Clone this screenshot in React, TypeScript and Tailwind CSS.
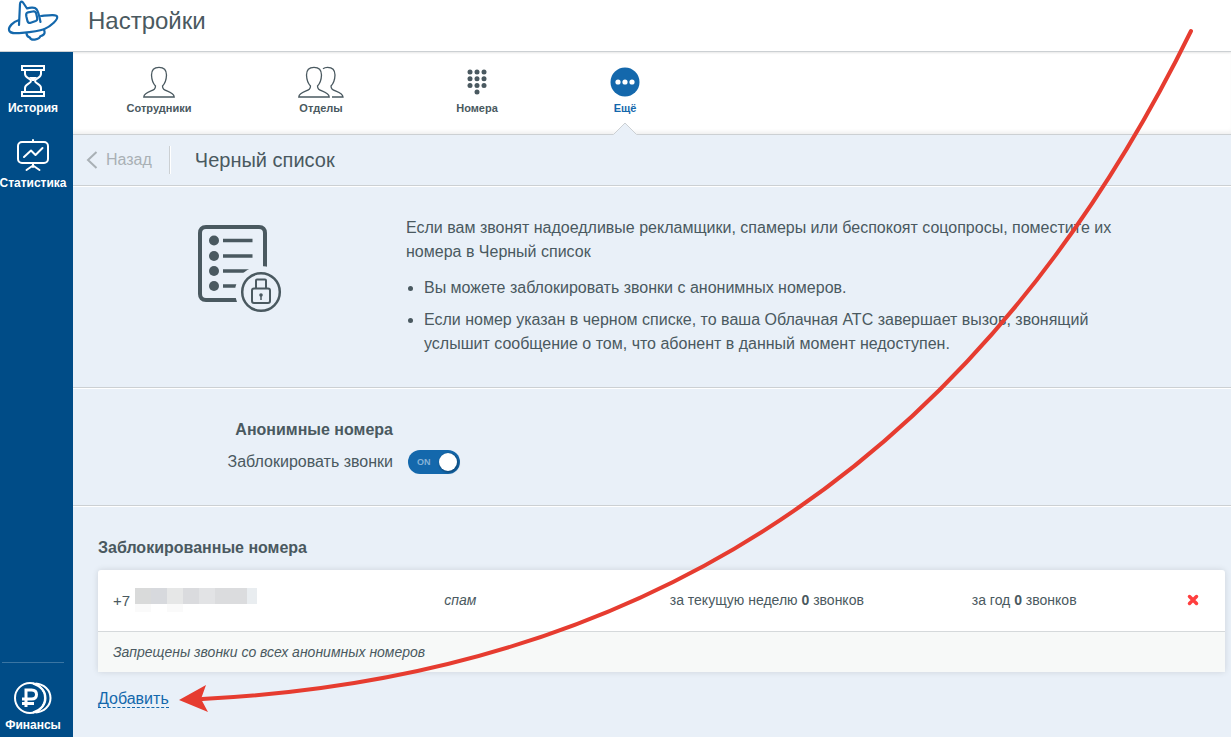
import { useState } from 'react'
import type { ReactNode } from 'react'
import { clsx } from 'clsx'

const hiddenDigits = [
  { top: 'bg-[#d9dada]', bottom: 'bg-[#fafafa]' },
  { top: 'bg-[#d7d9dd]', bottom: 'bg-white' },
  { top: 'bg-[#e6e7e7]', bottom: 'bg-[#fafafa]' },
  { top: 'bg-[#dadbde]', bottom: 'bg-white' },
  { top: 'bg-[#e2e3e5]', bottom: 'bg-white' },
  { top: 'bg-[#dbdcde]', bottom: 'bg-white' },
  { top: 'bg-[#dbdcde]', bottom: 'bg-white' }
]

function LogoIcon(): React.JSX.Element {
  return (
    <svg width="60" height="42" viewBox="0 0 60 42" fill="none" stroke="#1468ac" strokeWidth="2.200" strokeLinecap="round" strokeLinejoin="round">
      <path d="M19 25 20 4c.1-2.500 1.500-3 3-1.500L27 8.500c3.500-1.300 8-1.200 9.500.7 1.500 2 2.500 5 4 12.800" />
      <path d="M19 20C12.500 22 8.500 27 9 30c.5 3.500 8 3.500 13 2.800 10-.8 16-1.300 22-3.600 8-3.200 13.500-9.700 13.200-12.200-.4-3-10-1.500-16.200-1" />
      <path d="M26.500 33.500c.3 2.500 1.300 3.500 3.300 3.800.7 2.200 2 2.700 5 2.300 3.200-.5 5.200-1.400 5.500-3.400 2.700-.7 4.500-2 4.300-4.200l-.6-2.500" />
      <path d="m28 12.300 4.800-.8c2-.3 3 .3 3.400 2l1 4.500c.3 1.700-.2 2.500-1.500 3l-5 1.700c-1.700.6-2.700.1-3.200-1.500l-1.200-5c-.4-2 .1-3.500 1.700-3.900Z" />
    </svg>
  )
}

function HourglassIcon(): React.JSX.Element {
  return (
    <svg width="26" height="32" viewBox="0 0 26 32" fill="none" stroke="#fff" strokeWidth="2">
      <path d="M2 1h22v4H2zM2 27h22v4H2zM5 5v4c0 4 6 4.500 6 7s-6 3-6 7v4M21 5v4c0 4-6 4.500-6 7s6 3 6 7v4" />
      <path fill="#fff" stroke="none" d="M9 12h8l-3 4h-2z" />
    </svg>
  )
}

function ChartIcon(): React.JSX.Element {
  return (
    <svg width="34" height="33" viewBox="0 0 34 33" fill="none" stroke="#fff" strokeWidth="2" strokeLinecap="round" strokeLinejoin="round">
      <rect x="2" y="3" width="30" height="21" rx="4" />
      <path d="M17 1v2M17 24v4M10.500 31l6.500-4.500 6.500 4.500M8 18l7-6.500 4.500 4.500 7-7" />
    </svg>
  )
}

function RoubleIcon(): React.JSX.Element {
  return (
    <svg width="38" height="32" viewBox="0 0 38 32" fill="none" stroke="#fff" strokeWidth="2">
      <circle cx="16" cy="16" r="15" />
      <path d="M21.500 1.500c8.500.5 15 6.500 15 14.500s-6.500 14-15 14.500M19 1.500c7 2.500 12.500 7 12.500 14.500S26 28 19 30.500" />
      <path strokeWidth="3" d="M12 25V8h5.500c3 0 5 1.500 5 4.500s-2 4.500-5 4.500H8M8 21.500h12" />
    </svg>
  )
}

function PersonIcon(): React.JSX.Element {
  return (
    <svg width="32" height="32" viewBox="0 0 32 32" fill="none" stroke="#4a5960" strokeWidth="1.300">
      <path d="M12.500 20C9.500 17 8.700 14 8.500 9c0-5 2.500-7.700 7.500-7.700s7.500 2.700 7.500 7.700c-.2 5-1 8-4 11 0 3 1.500 3.800 5 5.200C29 27 31 28.200 31.200 31H.8c.2-2.800 2.200-4 6.700-5.800 3.500-1.400 5-2.200 5-5.200Z" />
    </svg>
  )
}

function PeopleIcon(): React.JSX.Element {
  return (
    <svg width="46" height="32" viewBox="0 0 46 32" fill="none" stroke="#4a5960" strokeWidth="1.300">
      <path d="M12.500 20C9.500 17 8.700 14 8.500 9c0-5 2.500-7.700 7.500-7.700s7.500 2.700 7.500 7.700c-.2 5-1 8-4 11 0 3 1.500 3.800 5 5.200C29 27 31 28.200 31.200 31H.8c.2-2.800 2.200-4 6.700-5.800 3.500-1.400 5-2.200 5-5.200Z" />
      <path d="M25 2.800c1.200-1 2.700-1.500 4.500-1.500 5 0 7.500 2.700 7.500 7.700-.2 5-1 8-4 11 0 3 1.500 3.800 5 5.200 4.500 1.800 6.800 3 7 5.800H34" />
    </svg>
  )
}

function DialpadIcon(): React.JSX.Element {
  return (
    <svg width="20" height="26" viewBox="0 0 20 26" fill="#4a5960">
      {[3, 10, 17].map((x) => [3, 9.7, 16.4].map((y) => <circle key={`${x}-${y}`} cx={x} cy={y} r="2.500" />))}
      <circle cx="10" cy="23" r="2.500" />
    </svg>
  )
}

function MoreIcon(): React.JSX.Element {
  return (
    <svg width="30" height="30" viewBox="0 0 30 30">
      <circle cx="15" cy="15" r="14.500" fill="#1468ac" />
      <g fill="#fff">
        <circle cx="8" cy="15" r="2.600" />
        <circle cx="15" cy="15" r="2.600" />
        <circle cx="22" cy="15" r="2.600" />
      </g>
    </svg>
  )
}

function BlacklistIcon(): React.JSX.Element {
  return (
    <svg className="shrink-0" width="84" height="88" viewBox="0 0 84 88" fill="none" stroke="#4a5960">
      <path strokeWidth="4" d="M67 50V8c0-3.500-2-6-6-6H8C4 2 2 4.500 2 8v61c0 3.500 2 6 6 6h40" />
      <path strokeWidth="3.500" d="M25 15.500h29.500M25 31h29.500M25 46h29.500M25 61h20" />
      <g fill="#4a5960" stroke="none">
        <circle cx="16" cy="15.500" r="5" />
        <circle cx="16" cy="31" r="5" />
        <circle cx="16" cy="46" r="5" />
        <circle cx="16" cy="61" r="5" />
      </g>
      <circle cx="63" cy="67" r="26" fill="#e9f0f8" stroke="none" />
      <circle cx="63" cy="67" r="18.800" strokeWidth="2.500" />
      <rect x="54" y="63.500" width="18" height="14.500" rx="2" strokeWidth="2" />
      <path strokeWidth="2" d="M58 63.500V55.500c0-.8.500-1 1-1h8c.5 0 1 .2 1 1v8" />
      <circle cx="63" cy="70" r="1.800" fill="#4a5960" stroke="none" />
      <path strokeWidth="1.500" d="M63 70v5" />
    </svg>
  )
}

function SideItem({ icon, label }: { icon: ReactNode; label: string }): React.JSX.Element {
  return (
    <a href="#" className="flex w-[66px] flex-col items-center gap-[3px] text-xs leading-4 font-bold text-white">
      {icon}
      <span>{label}</span>
    </a>
  )
}

function Tab({
  icon,
  label,
  active,
  className
}: {
  icon: ReactNode
  label: string
  active?: boolean
  className: string
}): React.JSX.Element {
  return (
    <a
      href="#"
      className={clsx(
        'relative flex flex-col items-center pt-3.5 text-[11px] leading-4 font-bold',
        active ? 'text-[#1468ac]' : 'text-[#4a5960]',
        className
      )}
    >
      <span className="flex h-8 items-center">{icon}</span>
      <span className="mt-0.5">{label}</span>
      {active && (
        <svg className="absolute -bottom-px" width="24" height="13" viewBox="0 0 24 13" fill="#e9f0f8" stroke="#ccd0d3">
          <path stroke="none" d="M0 13 12 1l12 12z" />
          <path d="M.5 12.500 12 1l11.500 11.500" />
        </svg>
      )}
    </a>
  )
}

// Curved pointer that leads to the "Добавить" link.
function Pointer(): React.JSX.Element {
  return (
    <svg className="pointer-events-none absolute top-0 left-0 z-30" width="1231" height="737" viewBox="0 0 1231 737">
      <path d="M1191 31Q879 665 202 699" fill="none" stroke="#e63c30" strokeWidth="4" strokeLinecap="round" />
      <path d="M179 700 206 685 201 699 208 712z" fill="#e63c30" />
    </svg>
  )
}

export default function App(): React.JSX.Element {
  const [blocked, setBlocked] = useState(true)

  return (
    <div className="relative flex min-h-screen flex-col overflow-hidden bg-[#e9f0f8] font-['Liberation_Sans',Arial,sans-serif] text-base text-[#4a5960]">
      <header className="z-10 flex h-[52px] items-start border-b border-[#ccd0d3] bg-white shadow-[0_1px_2px_#0000001a]">
        <a href="#" aria-label="Настройки" className="w-[88px]">
          <LogoIcon />
        </a>
        <h1 className="pt-1.5 text-2xl leading-[30px]">Настройки</h1>
      </header>

      <div className="flex flex-1">
        <nav className="z-20 flex w-[73px] shrink-0 flex-col bg-[#004c87]">
          <div className="flex flex-col gap-[23px] pt-[13px]">
            <SideItem icon={<HourglassIcon />} label="История" />
            <SideItem icon={<ChartIcon />} label="Статистика" />
          </div>
          <div className="mt-auto pb-1">
            <hr className="mr-[9px] mb-[19px] ml-0.5 border-[#3a75a3]" />
            <SideItem icon={<RoubleIcon />} label="Финансы" />
          </div>
        </nav>

        <main className="min-w-0 flex-1">
          <nav className="flex h-[83px] border-b border-[#ccd0d3] bg-white shadow-[inset_0_-4px_4px_-2px_#00000012]">
            <Tab className="w-[172px]" icon={<PersonIcon />} label="Сотрудники" />
            <Tab className="w-[152px]" icon={<PeopleIcon />} label="Отделы" />
            <Tab className="w-[160px]" icon={<DialpadIcon />} label="Номера" />
            <Tab className="w-[136px]" icon={<MoreIcon />} label="Ещё" active />
          </nav>

          <div className="flex h-[51px] items-center border-b border-[#ccd0d3] pl-3">
            <button type="button" className="flex h-7 items-center gap-2 border-r border-[#ccd0d3] pr-[17px] text-[#a9b0b5] shadow-[1px_0_#fff]">
              <svg width="13" height="18" viewBox="0 0 13 18" fill="none" stroke="#a9b0b5" strokeWidth="2">
                <path d="M11.500 1 3 9l8.500 8" />
              </svg>
              Назад
            </button>
            <h2 className="pl-[25px] text-xl">Черный список</h2>
          </div>

          <section className="flex h-[202px] border-t border-b border-t-white border-b-[#ccd0d3] pt-[29px] pl-[125px]">
            <div className="w-[208px] shrink-0 pt-[9px]">
              <BlacklistIcon />
            </div>
            <div className="max-w-[720px] leading-6">
              <p>
                Если вам звонят надоедливые рекламщики, спамеры или беспокоят соцопросы, поместите их номера в Черный
                список
              </p>
              <ul className="mt-3 flex list-disc flex-col gap-2 pl-[18px]">
                <li>Вы можете заблокировать звонки с анонимных номеров.</li>
                <li>
                  Если номер указан в черном списке, то ваша Облачная АТС завершает вызов, звонящий услышит сообщение о
                  том, что абонент в данный момент недоступен.
                </li>
              </ul>
            </div>
          </section>

          <section className="flex h-[118px] flex-col border-t border-b border-t-white border-b-[#ccd0d3] pt-[29px]">
            <h3 className="w-80 text-right leading-6 font-bold">Анонимные номера</h3>
            <div className="mt-2 flex items-center">
              <label htmlFor="block-anonymous" className="w-80 text-right leading-6">
                Заблокировать звонки
              </label>
              <span className="relative ml-[15px] flex items-center">
                <input
                  id="block-anonymous"
                  type="checkbox"
                  checked={blocked}
                  onChange={(e) => setBlocked(e.target.checked)}
                  className="h-6 w-[52px] appearance-none rounded-full bg-[#97a5af] before:mt-[3px] before:ml-[3px] before:block before:size-[18px] before:rounded-full before:bg-white checked:bg-[#1468ac] checked:before:ml-[31px] checked:before:shadow-[1px_1px_2px_1px_#00000040]"
                />
                {blocked && (
                  <span className="pointer-events-none absolute left-[9px] text-[9px] leading-6 font-bold text-[#85b3d8]">ON</span>
                )}
              </span>
            </div>
          </section>

          <section className="border-t border-white pt-[29px] pr-1.5 pl-[25px]">
            <h3 className="leading-6 font-bold">Заблокированные номера</h3>
            <table className="mt-2.5 w-full table-fixed rounded-t-[3px] bg-white text-left text-sm shadow-[0_0_6px_#0000001f]">
              <colgroup>
                <col className="w-[29.400%]" />
                <col className="w-[20%]" />
                <col className="w-[26.800%]" />
                <col className="w-[19%]" />
                <col />
              </colgroup>
              <tbody>
                <tr className="h-[61px] border-b border-[#d5d9db]">
                  <td className="pl-[15px] text-[15px]">
                    <div className="flex items-center gap-[5px]">
                      +7
                      <div className="flex">
                        {hiddenDigits.map((d, i) => (
                          <div key={i} className="w-4">
                            <div className={clsx('h-4', d.top)} />
                            <div className={clsx('h-2', d.bottom)} />
                          </div>
                        ))}
                        <div className="h-4 w-2.5 bg-[#e9edf0]" />
                      </div>
                    </div>
                  </td>
                  <td className="pl-[15px] italic">спам</td>
                  <td className="pl-[15px]">
                    за текущую неделю <b>0</b> звонков
                  </td>
                  <td className="pl-[15px]">
                    за год <b>0</b> звонков
                  </td>
                  <td className="pl-4">
                    <button type="button" aria-label="Удалить" className="block">
                      <svg width="12" height="12" viewBox="0 0 12 12" stroke="#ff3f3f" strokeWidth="3.500" strokeLinecap="round">
                        <path d="m2.500 2.500 7 7m0-7-7 7" />
                      </svg>
                    </button>
                  </td>
                </tr>
                <tr className="h-[41px] bg-[#f7f9f8] italic">
                  <td colSpan={5} className="pl-[15px]">
                    Запрещены звонки со всех анонимных номеров
                  </td>
                </tr>
              </tbody>
            </table>
            <a href="#" className="mt-[18px] inline-block border-b border-dashed border-[#1468ac] leading-[17px] text-[#1468ac]">
              Добавить
            </a>
          </section>
        </main>
      </div>

      <Pointer />
    </div>
  )
}
